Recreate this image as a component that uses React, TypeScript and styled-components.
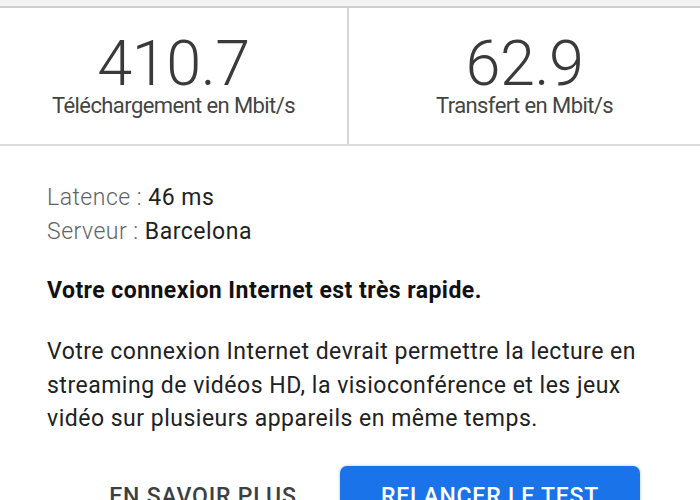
import React from 'react'
import styled, { createGlobalStyle } from 'styled-components'

const GlobalStyle = createGlobalStyle`
  *, *::before, *::after {
    box-sizing: border-box;
  }
  html, body {
    margin: 0;
    padding: 0;
    background: #ffffff;
  }
  body {
    font-family: Roboto, "Noto Sans", sans-serif;
    color: #202124;
  }
`

const Page = styled.div`
  width: 700px;
  height: 500px;
  overflow: hidden;
  display: flex;
  flex-direction: column;
  & > * {
    flex-shrink: 0;
  }
`

const TopBand = styled.div`
  height: 8px;
  background: #f3f3f3;
  border-bottom: 2px solid #cfcfcf;
`

const Stats = styled.div`
  display: grid;
  grid-template-columns: 349px 1fr;
  height: 138px;
  border-bottom: 2px solid #dcdcdc;
`

const StatCell = styled.div<{ $divider?: boolean }>`
  display: flex;
  flex-direction: column;
  align-items: center;
  padding-top: 27px;
  border-right: ${({ $divider }) => ($divider ? '2px solid #d6d6d6' : 'none')};
`

const StatValue = styled.div`
  font-weight: 300;
  font-size: 63px;
  line-height: 58px;
  color: #3a3a3a;
  letter-spacing: -0.5px;
`

const StatLabel = styled.div`
  font-weight: 400;
  font-size: 22px;
  line-height: 26px;
  color: #444444;
  letter-spacing: -0.6px;
`

const Body = styled.div`
  padding: 35px 47px 0;
  display: flex;
  flex-direction: column;
`

const InfoLine = styled.div`
  font-size: 23px;
  line-height: 34px;
  color: #1f1f1f;
  letter-spacing: 0.5px;
`

const InfoKey = styled.span`
  font-weight: 300;
  color: #5f6368;
`

const Verdict = styled.div`
  margin-top: 27px;
  font-size: 23px;
  font-weight: 700;
  line-height: 30px;
  color: #111111;
  letter-spacing: 0.45px;
`

const Paragraph = styled.p`
  margin: 29px 0 0;
  max-width: 606px;
  font-size: 23px;
  line-height: 33.5px;
  color: #202124;
  letter-spacing: 0.5px;
`

const Actions = styled.div`
  display: flex;
  gap: 24px;
  margin-top: 30px;
  margin-left: 43px;
`

const Button = styled.button<{ $primary?: boolean }>`
  width: ${({ $primary }) => ($primary ? '300px' : '226px')};
  height: 54px;
  border: none;
  border-radius: 7px;
  background: ${({ $primary }) => ($primary ? '#1a73e8' : 'transparent')};
  color: ${({ $primary }) => ($primary ? '#ffffff' : '#3c4043')};
  font-family: Roboto, sans-serif;
  font-size: 23px;
  font-weight: 500;
  letter-spacing: 0.8px;
  padding: 17px 0 0;
  display: flex;
  justify-content: center;
  align-items: flex-start;
  white-space: nowrap;
  box-shadow: ${({ $primary }) => ($primary ? '0 0 3px rgba(26,115,232,0.45)' : 'none')};
`

export default function App() {
  return (
    <Page>
      <GlobalStyle />
      <TopBand />
      <Stats>
        <StatCell $divider>
          <StatValue>410.7</StatValue>
          <StatLabel>Téléchargement en Mbit/s</StatLabel>
        </StatCell>
        <StatCell>
          <StatValue>62.9</StatValue>
          <StatLabel>Transfert en Mbit/s</StatLabel>
        </StatCell>
      </Stats>
      <Body>
        <InfoLine>
          <InfoKey>Latence :</InfoKey> 46 ms
        </InfoLine>
        <InfoLine>
          <InfoKey>Serveur :</InfoKey> Barcelona
        </InfoLine>
        <Verdict>Votre connexion Internet est très rapide.</Verdict>
        <Paragraph>
          Votre connexion Internet devrait permettre la lecture en streaming de vidéos HD, la
          visioconférence et les jeux vidéo sur plusieurs appareils en même temps.
        </Paragraph>
        <Actions>
          <Button>EN SAVOIR PLUS</Button>
          <Button $primary>RELANCER LE TEST</Button>
        </Actions>
      </Body>
    </Page>
  )
}
